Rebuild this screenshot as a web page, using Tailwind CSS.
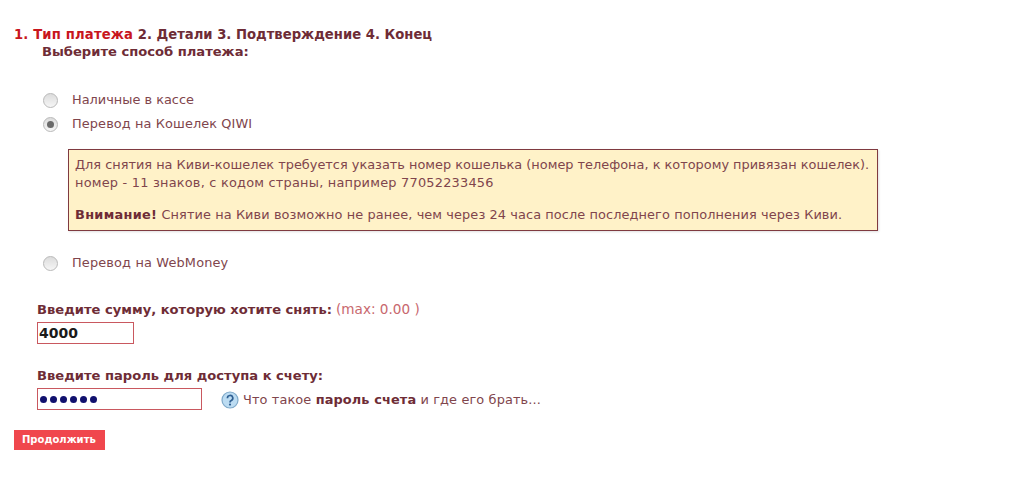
<!DOCTYPE html>
<html lang="en">
<head>
  <meta charset="UTF-8" />
  <title>Вывод средств</title>
  <script src="https://cdn.jsdelivr.net/npm/@tailwindcss/browser@4"></script>
</head>
<body class="bg-white text-[#80454c] font-['DejaVu_Sans',sans-serif] text-[12.9px] overflow-hidden">
  <div class="w-[1032px] h-[489px] pl-[14px] pt-[27px]">

    <!-- Шаги -->
    <div class="h-[16px] leading-[16px] text-[13.2px] font-bold text-[#6e2c36]">
      <span class="text-[#c8161d] tracking-[0.15px]">1. Тип платежа</span> 2. Детали 3. Подтверждение 4. Конец
    </div>

    <div class="ml-[28px] h-[17px] leading-[17px] text-[13.1px] font-bold text-[#6e2c36]">Выберите способ платежа:</div>

    <!-- Способы -->
    <div class="mt-[28px] ml-[29px] flex items-center h-[24px]">
      <span class="w-[15px] h-[15px] rounded-full border border-[#b9b9b9] bg-gradient-to-b from-[#dcdcdc] to-[#f6f6f6]"></span>
      <span class="ml-[14px]">Наличные в кассе</span>
    </div>
    <div class="ml-[29px] flex items-center h-[24px]">
      <span class="w-[15px] h-[15px] rounded-full border border-[#b9b9b9] bg-gradient-to-b from-[#dcdcdc] to-[#f6f6f6] flex items-center justify-center">
        <span class="w-[7px] h-[7px] rounded-full bg-[#6a6a6a]"></span>
      </span>
      <span class="ml-[14px] tracking-[0.1px]">Перевод на Кошелек QIWI</span>
    </div>

    <div class="ml-[54px] mt-[13px] w-[810px] h-[82px] border border-[#7f3a40] bg-[#fff2c8] pl-[6px] pt-[6px] leading-[18px] shadow-[1px_1px_2px_rgba(0,0,0,0.12)]">
      <p>Для снятия на Киви-кошелек требуется указать номер кошелька (номер телефона, к которому привязан кошелек).</p>
      <p class="tracking-[0.22px]">номер - 11 знаков, с кодом страны, например 77052233456</p>
      <p class="mt-[14px] tracking-[0.09px]"><b class="text-[#6e2c36] tracking-[0.3px]">Внимание!</b> Снятие на Киви возможно не ранее, чем через 24 часа после последнего пополнения через Киви.</p>
    </div>

    <div class="ml-[29px] mt-[20px] flex items-center h-[24px]">
      <span class="w-[15px] h-[15px] rounded-full border border-[#b9b9b9] bg-gradient-to-b from-[#dcdcdc] to-[#f6f6f6]"></span>
      <span class="ml-[14px] tracking-[0.15px]">Перевод на WebMoney</span>
    </div>

    <!-- Сумма -->
    <div class="ml-[23px] mt-[25px] h-[18px] leading-[18px]">
      <b class="text-[#6e2c36] text-[13.1px]">Введите сумму, которую хотите снять:</b>
      <span class="text-[#c8686e] text-[13.6px]">(max: 0.00 )</span>
    </div>
    <div class="ml-[23px] mt-[4px] w-[97px] h-[22px] border border-[#c9585f] pl-[1px] leading-[20px] text-[14px] font-bold text-[#1a1a1a]">4000</div>

    <!-- Пароль -->
    <div class="ml-[23px] mt-[23px] h-[18px] leading-[18px] text-[13.1px] font-bold text-[#6e2c36]">Введите пароль для доступа к счету:</div>
    <div class="ml-[23px] mt-[3px] flex items-center">
      <div class="w-[165px] h-[22px] border border-[#c9585f] pl-[2px] flex items-center gap-[3px]">
        <span class="w-[7px] h-[7px] rounded-full bg-[#10106e]"></span>
        <span class="w-[7px] h-[7px] rounded-full bg-[#10106e]"></span>
        <span class="w-[7px] h-[7px] rounded-full bg-[#10106e]"></span>
        <span class="w-[7px] h-[7px] rounded-full bg-[#10106e]"></span>
        <span class="w-[7px] h-[7px] rounded-full bg-[#10106e]"></span>
        <span class="w-[7px] h-[7px] rounded-full bg-[#10106e]"></span>
      </div>
      <svg class="ml-[19px] mt-[2px] w-[18px] h-[18px]" viewBox="0 0 18 18">
        <circle cx="9" cy="9" r="8" fill="#bcdcf2" stroke="#7fa9c9" stroke-width="1.2" />
        <path d="M6.4 7.2a2.7 2.7 0 1 1 3.9 2.4c-.9.5-1.3.9-1.3 1.8" fill="none" stroke="#2f5f92" stroke-width="1.7" />
        <circle cx="9" cy="13.6" r="1.1" fill="#2f5f92" />
      </svg>
      <span class="ml-[4px] mt-[1px] tracking-[0.12px]">Что такое <b class="text-[#6e2c36]">пароль счета</b> и где его брать...</span>
    </div>

    <button class="mt-[20px] block w-[91px] h-[20px] bg-[#f0474d] text-white text-[10px] font-bold text-left pl-[8px] leading-[20px]">Продолжить</button>
  </div>
</body>
</html>
